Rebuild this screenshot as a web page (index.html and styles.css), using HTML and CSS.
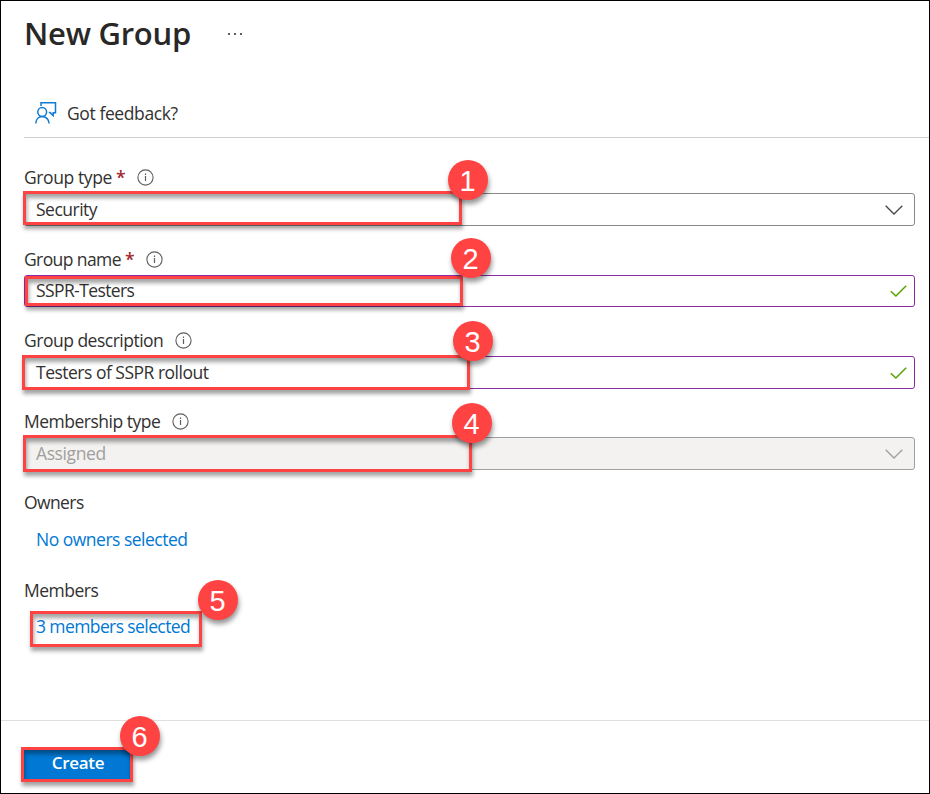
FILE: index.html
```html
<!DOCTYPE html>
<html lang="en">
<head>
<meta charset="utf-8">
<title>New Group</title>
<link rel="stylesheet" href="styles.css">
</head>
<body>
<svg class="defs" width="0" height="0">
  <symbol id="info" viewBox="0 0 17 17"><circle cx="8.5" cy="8.5" r="7.6" fill="none" stroke="#605e5c" stroke-width="1.1"/><path d="M8.5 7v5M8.5 4.6v1.3" stroke="#605e5c" stroke-width="1.2"/></symbol>
  <symbol id="chevron" viewBox="0 0 18 10"><path d="M.7.8 9 9 17.3.8" fill="none" stroke="currentColor" stroke-width="1.3"/></symbol>
  <symbol id="check" viewBox="0 0 17 12"><path d="M.8 6.2 5.9 11 16.2.8" fill="none" stroke="#57a300" stroke-width="1.5"/></symbol>
</svg>
<div class="page">
  <header class="header"><h1>New Group</h1><svg class="more" width="16" height="4" viewBox="0 0 16 4"><path d="M1 1h2v2H1zM7 1h2v2H7zM13 1h2v2h-2z" fill="#605e5c"/></svg></header>
  <div class="toolbar">
    <svg width="22" height="22" viewBox="0 0 22 22" fill="none" stroke="#0f7bd4" stroke-width="1.5"><circle cx="7.2" cy="10" r="4.4"/><path d="M.8 21.500c.2-4.300 3-7 6.500-7s6.600 2.700 6.800 7M6 4V.8h14.500v10h-2.300v2.800l-3.200-3h-1.200"/></svg>
    <span class="feedback">Got feedback?</span>
  </div>
  <main class="form">
    <section class="field">
      <div class="label"><span class="t-type">Group type</span><b>*</b><svg class="info"><use href="#info"/></svg></div>
      <div class="box"><span class="t-security">Security</span><svg class="chevron"><use href="#chevron"/></svg><i class="mark m1"></i><i class="badge b1">1</i></div>
    </section>
    <section class="field">
      <div class="label"><span class="t-name">Group name</span><b>*</b><svg class="info"><use href="#info"/></svg></div>
      <div class="box valid short"><span class="t-sspr">SSPR-Testers</span><svg class="check"><use href="#check"/></svg><i class="mark m2"></i><i class="badge b2">2</i></div>
    </section>
    <section class="field">
      <div class="label"><span class="t-desc">Group description</span><svg class="info"><use href="#info"/></svg></div>
      <div class="box valid"><span class="t-rollout">Testers of SSPR rollout</span><svg class="check"><use href="#check"/></svg><i class="mark m3"></i><i class="badge b3">3</i></div>
    </section>
    <section class="field last">
      <div class="label"><span class="t-membership">Membership type</span><svg class="info"><use href="#info"/></svg></div>
      <div class="box disabled"><span class="t-assigned">Assigned</span><svg class="chevron"><use href="#chevron"/></svg><i class="mark m4"></i><i class="badge b4">4</i></div>
    </section>
    <section class="people owners"><span class="t-owners">Owners</span><a class="t-noowners">No owners selected</a></section>
    <section class="people members"><span class="t-members">Members</span><a class="t-three">3 members selected</a><i class="mark m5"></i><i class="badge b5">5</i></section>
  </main>
  <footer class="footer"><div class="create"><span>Create</span><i class="mark m6"></i><i class="badge b6">6</i></div></footer>
</div>
</body>
</html>
```
FILE: styles.css
```css
* { box-sizing: border-box; }
body { margin: 0; }
.defs { position: absolute; }
.page { width: 930px; height: 794px; border: 1px solid #000; background: #fff; color: #323130; font: 17.5px/24px "Open Sans", "Noto Sans", sans-serif; letter-spacing: -.5px; display: flex; flex-direction: column; overflow: hidden; white-space: nowrap; }
.header { height: 87px; padding: 12px 0 0 23px; display: flex; align-items: flex-start; }
h1 { margin: 0; width: 203px; color: #292827; font-size: 31px; line-height: 40px; font-weight: 600; letter-spacing: -.25px; }
.more { margin-top: 19px; }
.toolbar { height: 50px; margin-left: 23px; padding: 0 0 0 11px; border-bottom: 1px solid #d2d0ce; display: flex; align-items: center; gap: 10px; }
.form { height: 582px; padding: 6px 14px 0 23px; }
.label { height: 49px; padding: 18px 0 1px; display: flex; align-items: center; line-height: 24px; }
.last .label { height: 48px; padding: 17px 0 1px; }
.label b { color: #a4262c; font-weight: 600; margin-left: 4px; }
.info { width: 17px; height: 17px; margin-left: 12px; }
.box { position: relative; height: 33px; border: 1px solid #8a8886; border-radius: 3px; padding: 0 11px; display: flex; align-items: center; justify-content: space-between; }
.box > span { padding-bottom: 1px; }
.short { height: 32px; }
.short > span { padding-bottom: 2px; }
.valid { border-color: #8a2da5; padding-right: 7px; }
.disabled { background: #f3f2f1; border-color: #a19f9d; color: #a19f9d; }
.chevron { width: 18px; height: 10px; color: #484644; }
.disabled .chevron { color: #a19f9d; }
.check { width: 17px; height: 12px; }
.t-type, .t-assigned, .feedback { letter-spacing: -.4px; }
.t-name, .t-sspr, .t-three, .t-owners { letter-spacing: -.6px; }
.mark { position: absolute; border: 3px solid #ff4343; box-shadow: 1px 4px 4px rgba(0,0,0,.36), inset 1px 4px 4px rgba(0,0,0,.36); }
.badge { position: absolute; width: 40px; height: 40px; border-radius: 50%; background: #ff4343; color: #fff; font: 29px/42px "Liberation Sans", sans-serif; letter-spacing: 0; text-indent: -1px; text-align: center; box-shadow: 1px 4px 5px rgba(0,0,0,.42); }
.m1 { left: -2px; top: -3px; width: 439px; height: 34px; }
.m2 { left: 0; top: 0; width: 438px; height: 30px; }
.m3 { left: -3px; top: -2px; width: 448px; height: 35px; }
.m4 { left: -2px; top: -3px; width: 449px; height: 37px; }
.b1 { left: 423px; top: -34px; }
.b2 { left: 426px; top: -38px; }
.b3 { left: 428px; top: -36px; }
.b4 { left: 427px; top: -35px; }
.people { position: relative; display: flex; flex-direction: column; gap: 13px; align-items: flex-start; }
.people a { color: #0078d4; margin-left: 12px; }
.owners { margin-top: 20px; }
.members { margin-top: 27px; gap: 12px; }
.m5 { left: 6px; top: 33px; width: 172px; height: 36px; }
.b5 { left: 174px; top: 2px; }
.footer { height: 73px; border-top: 1px solid #e1dfdd; padding: 28px 0 0 22px; }
.create { position: relative; width: 108px; height: 32px; background: #0078d4; color: #fff; font-weight: 600; font-size: 17px; letter-spacing: -.3px; line-height: 28px; text-align: center; padding-left: 2px; }
.m6 { left: -2px; top: -2px; width: 112px; height: 35px; }
.b6 { left: 97px; top: -33px; }
```
